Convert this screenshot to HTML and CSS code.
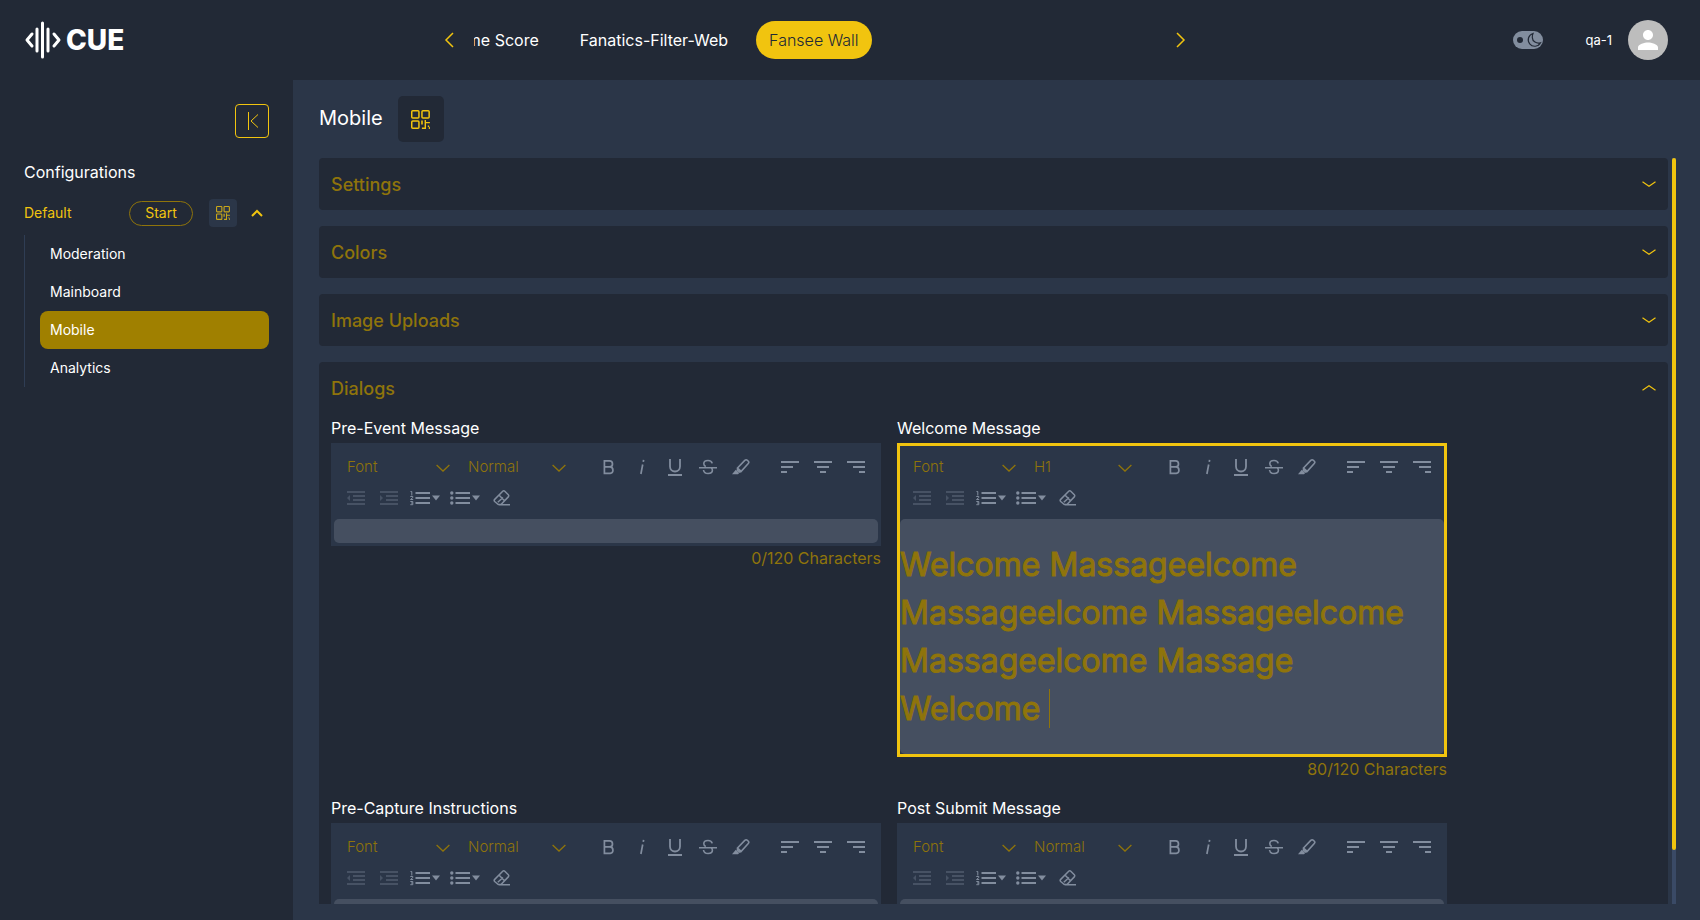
FILE: index.html
```html
<!DOCTYPE html>
<html lang="en">
<head>
<meta charset="utf-8">
<meta name="viewport" content="width=device-width, initial-scale=1">
<title>CUE - Mobile configuration</title>
<link rel="stylesheet" href="styles.css">
</head>
<body>
<svg class="sprite" aria-hidden="true">
  <symbol id="qr" viewBox="0 0 19 19">
    <g fill="none" stroke="currentColor" stroke-width="1.5"><rect x=".75" y=".75" width="7.2" height="7.2" rx="1"/><rect x="10.95" y=".75" width="7.2" height="7.2" rx="1"/><rect x=".75" y="10.95" width="7.2" height="7.2" rx="1"/></g>
    <path fill="currentColor" d="M10.2 10.6h1.6v4h-1.6zM13.6 10h1.4v2h3.9v1.2H15V18.9h-4.1v-1.5h2.7zM16.8 15.4h1.2v1.3h.9v2.2h-1.1v-1.8h-1z"/>
  </symbol>
  <symbol id="down" viewBox="0 0 14 8"><path d="M.6 1 7 7l6.400-6" fill="none" stroke="currentColor" stroke-width="1.3"/></symbol>
  <symbol id="fold" viewBox="0 0 14 6"><path d="M.5.7 7 5.200 13.500.7" fill="none" stroke="currentColor" stroke-width="1.2"/></symbol>
  <symbol id="bold" viewBox="0 0 18 18"><path d="M4.400 2.900h5.100a3 3 0 0 1 0 6H4.400zM4.400 8.900h5.800a3.300 3.300 0 0 1 0 6.500H4.400z" fill="none" stroke="currentColor" stroke-width="1.700"/></symbol>
  <symbol id="italic" viewBox="0 0 18 18"><path d="M9.700 6.500 7.900 16M10.600 1.900l-.3 2" fill="none" stroke="currentColor" stroke-width="1.700"/></symbol>
  <symbol id="underline" viewBox="0 0 18 18"><path d="M4 1v7.500a5 5 0 0 0 10 0V1M2 17h14" fill="none" stroke="currentColor" stroke-width="1.800"/></symbol>
  <symbol id="strike" viewBox="0 0 18 18"><path d="M0 9.700h18M13.200 5.400C12.800 3.500 11.200 2.500 9 2.500c-2.500 0-4.200 1.200-4.200 3.200 0 1.200.7 2.100 2 2.700M4.500 12c.3 2.200 2 3.500 4.600 3.500 2.500 0 4.300-1.200 4.300-3.200 0-1-.3-1.600-1-2.100" fill="none" stroke="currentColor" stroke-width="1.600"/></symbol>
  <symbol id="marker" viewBox="0 0 18 18"><path d="M5.500 10 12.800 2.400c.8-.8 1.800-.8 2.600-.1l.9.9c.7.7.7 1.500 0 2.300L9.200 13.300zM5.500 10v2.300l2.300 1.700 1.400-.7" fill="none" stroke="currentColor" stroke-width="1.600"/><path d="m3.800 11.800 3.400 3.200-1.200 1.200H0z" fill="currentColor"/></symbol>
  <symbol id="left" viewBox="0 0 18 18"><path d="M0 4h18M0 9h12M0 14h6" stroke="currentColor" stroke-width="2"/></symbol>
  <symbol id="center" viewBox="0 0 18 18"><path d="M0 4h18M3 9h12M6 14h6" stroke="currentColor" stroke-width="2"/></symbol>
  <symbol id="right" viewBox="0 0 18 18"><path d="M0 4h18M6 9h12M12 14h6" stroke="currentColor" stroke-width="2"/></symbol>
  <symbol id="outdent" viewBox="0 0 18 18"><path d="M0 3h18M6 7h12M6 11h12M0 15h18" stroke="currentColor" stroke-width="2"/><path d="M3 6v6L0 9z" fill="currentColor"/></symbol>
  <symbol id="indent" viewBox="0 0 18 18"><path d="M0 3h18M6 7h12M6 11h12M0 15h18" stroke="currentColor" stroke-width="2"/><path d="M0 6v6l3-3z" fill="currentColor"/></symbol>
  <symbol id="numbers" viewBox="0 0 30 18"><path d="M5.500 4H20M5.500 9H20M5.500 14H20" stroke="currentColor" stroke-width="2"/><path d="M.5 2.500h1.300v4M.3 7.500h2.500v1L.5 10.500h2.700M.3 12.500h2.500v3.200H.3M1 14h1.800" fill="none" stroke="currentColor"/><path d="M22 6.500h8L26 11.500z" fill="currentColor"/></symbol>
  <symbol id="bullets" viewBox="0 0 30 18"><path d="M5.500 4H20M5.500 9H20M5.500 14H20" stroke="currentColor" stroke-width="2"/><g fill="currentColor"><circle cx="1.800" cy="4" r="1.700"/><circle cx="1.800" cy="9" r="1.700"/><circle cx="1.800" cy="14" r="1.700"/><path d="M22 6.500h8L26 11.500z"/></g></symbol>
  <symbol id="eraser" viewBox="0 0 18 18"><path d="M1.700 10.400 9.700 2.300c.6-.6 1.500-.6 2.100 0l3.500 3.500c.6.6.6 1.500 0 2.100L8 15.500H5.300l-3.600-3c-.6-.6-.6-1.500 0-2.100zM6.200 6.200l5.300 5.600M4.800 13.200 10 8.500M6 15.700h11" fill="none" stroke="currentColor" stroke-width="1.500"/></symbol>
</svg>

<header class="topbar">
  <a class="logo" href="#" aria-label="CUE home">
    <svg class="logo-mark" viewBox="0 0 36 38" aria-hidden="true"><g fill="none" stroke="#fff" stroke-linecap="round" stroke-width="3"><path d="M17.500 2v34M12 8v22M23 8v22"/><path d="M7 13 2 19l5 6M29 13l5 6-5 6" stroke-linejoin="round"/></g></svg>
    <span class="logo-text">CUE</span>
  </a>
  <nav class="events" aria-label="Events">
    <button class="arrow" type="button" aria-label="Previous"><svg viewBox="0 0 10 16"><path d="M9 1 2 8l7 7" fill="none" stroke="currentColor" stroke-width="1.500"/></svg></button>
    <div class="event-window">
      <div class="event-track">
        <a class="event" href="#">Game Score</a>
        <a class="event" href="#">Fanatics-Filter-Web</a>
        <a class="event event-active" href="#" aria-current="page">Fansee Wall</a>
      </div>
    </div>
    <button class="arrow" type="button" aria-label="Next"><svg viewBox="0 0 10 16"><path d="m1 1 7 7-7 7" fill="none" stroke="currentColor" stroke-width="1.500"/></svg></button>
  </nav>
  <div class="account">
    <button class="theme" type="button" aria-label="Dark theme"><svg viewBox="0 0 30 18"><circle cx="7" cy="9" r="3" fill="#222936"/><path d="M20 2.500a6.500 6.500 0 1 0 7.500 9.300c-4 1.200-8-1.300-8.200-5.200-.1-1.600.200-3 .7-4.100z" fill="none" stroke="#222936" stroke-width="1.200"/></svg></button>
    <span class="user">qa-1</span>
    <button class="avatar" type="button" aria-label="Account"><svg viewBox="0 0 24 24"><path fill="#fff" d="M12 12c2.210 0 4-1.790 4-4s-1.790-4-4-4-4 1.790-4 4 1.790 4 4 4zm0 2c-2.670 0-8 1.340-8 4v2h16v-2c0-2.660-5.330-4-8-4z"/></svg></button>
  </div>
</header>

<div class="shell">
  <aside class="sidebar">
    <button class="collapse" type="button" aria-label="Collapse sidebar"><svg viewBox="0 0 12 18"><path d="M2.500 0v18M12 2.500 5 9l7 6.500" fill="none" stroke="currentColor"/></svg></button>
    <h2 class="side-title">Configurations</h2>
    <div class="config">
      <span class="config-name">Default</span>
      <button class="start" type="button">Start</button>
      <button class="qr-small" type="button" aria-label="Show QR code"><svg><use href="#qr"/></svg></button>
      <button class="fold" type="button" aria-label="Fold configuration"><svg viewBox="0 0 12 8"><path d="m1 7 5-5 5 5" fill="none" stroke="currentColor" stroke-width="2"/></svg></button>
    </div>
    <nav class="pages" aria-label="Configuration pages">
      <a class="page" href="#">Moderation</a>
      <a class="page" href="#">Mainboard</a>
      <a class="page page-active" href="#" aria-current="page">Mobile</a>
      <a class="page" href="#">Analytics</a>
    </nav>
  </aside>

  <main class="main">
    <div class="heading">
      <h1 class="title">Mobile</h1>
      <button class="qr-large" type="button" aria-label="Show QR code"><svg><use href="#qr"/></svg></button>
    </div>
    <div class="scroll">
      <div class="sections">
        <section class="panel"><button class="panel-head" type="button" aria-expanded="false"><span>Settings</span><svg><use href="#fold"/></svg></button></section>
        <section class="panel"><button class="panel-head" type="button" aria-expanded="false"><span>Colors</span><svg><use href="#fold"/></svg></button></section>
        <section class="panel"><button class="panel-head" type="button" aria-expanded="false"><span>Image Uploads</span><svg><use href="#fold"/></svg></button></section>
        <section class="panel">
          <button class="panel-head panel-open" type="button" aria-expanded="true"><span>Dialogs</span><svg><use href="#fold"/></svg></button>
          <div class="dialogs">

            <div class="field">
              <label class="label" for="pre-event">Pre-Event Message</label>
              <div class="editor">
                <div class="toolbar">
                  <div class="pick pick-font"><select aria-label="Font"><option>Font</option></select><svg><use href="#down"/></svg></div>
                  <div class="pick pick-size"><select aria-label="Text style"><option>Normal</option><option>H1</option></select><svg><use href="#down"/></svg></div>
                  <div class="tools tools-spaced">
                    <button class="tool" type="button" aria-label="Bold"><svg><use href="#bold"/></svg></button>
                    <button class="tool" type="button" aria-label="Italic"><svg><use href="#italic"/></svg></button>
                    <button class="tool" type="button" aria-label="Underline"><svg><use href="#underline"/></svg></button>
                    <button class="tool" type="button" aria-label="Strikethrough"><svg><use href="#strike"/></svg></button>
                    <button class="tool" type="button" aria-label="Highlight"><svg><use href="#marker"/></svg></button>
                  </div>
                  <div class="tools">
                    <button class="tool" type="button" aria-label="Align left"><svg><use href="#left"/></svg></button>
                    <button class="tool" type="button" aria-label="Align center"><svg><use href="#center"/></svg></button>
                    <button class="tool" type="button" aria-label="Align right"><svg><use href="#right"/></svg></button>
                  </div>
                  <div class="tools">
                    <button class="tool" type="button" aria-label="Outdent" disabled><svg><use href="#outdent"/></svg></button>
                    <button class="tool" type="button" aria-label="Indent" disabled><svg><use href="#indent"/></svg></button>
                    <button class="tool tool-wide" type="button" aria-label="Numbered list"><svg><use href="#numbers"/></svg></button>
                    <button class="tool tool-wide" type="button" aria-label="Bulleted list"><svg><use href="#bullets"/></svg></button>
                    <button class="tool" type="button" aria-label="Clear formatting"><svg><use href="#eraser"/></svg></button>
                  </div>
                </div>
                <textarea class="message" id="pre-event" rows="1"></textarea>
              </div>
              <p class="count">0/120 Characters</p>
            </div>

            <div class="field">
              <span class="label" id="welcome-label">Welcome Message</span>
              <div class="editor editor-focus">
                <div class="toolbar">
                  <div class="pick pick-font"><select aria-label="Font"><option>Font</option></select><svg><use href="#down"/></svg></div>
                  <div class="pick pick-size"><select aria-label="Text style"><option>H1</option><option>Normal</option></select><svg><use href="#down"/></svg></div>
                  <div class="tools tools-spaced">
                    <button class="tool" type="button" aria-label="Bold"><svg><use href="#bold"/></svg></button>
                    <button class="tool" type="button" aria-label="Italic"><svg><use href="#italic"/></svg></button>
                    <button class="tool" type="button" aria-label="Underline"><svg><use href="#underline"/></svg></button>
                    <button class="tool" type="button" aria-label="Strikethrough"><svg><use href="#strike"/></svg></button>
                    <button class="tool" type="button" aria-label="Highlight"><svg><use href="#marker"/></svg></button>
                  </div>
                  <div class="tools">
                    <button class="tool" type="button" aria-label="Align left"><svg><use href="#left"/></svg></button>
                    <button class="tool" type="button" aria-label="Align center"><svg><use href="#center"/></svg></button>
                    <button class="tool" type="button" aria-label="Align right"><svg><use href="#right"/></svg></button>
                  </div>
                  <div class="tools">
                    <button class="tool" type="button" aria-label="Outdent" disabled><svg><use href="#outdent"/></svg></button>
                    <button class="tool" type="button" aria-label="Indent" disabled><svg><use href="#indent"/></svg></button>
                    <button class="tool tool-wide" type="button" aria-label="Numbered list"><svg><use href="#numbers"/></svg></button>
                    <button class="tool tool-wide" type="button" aria-label="Bulleted list"><svg><use href="#bullets"/></svg></button>
                    <button class="tool" type="button" aria-label="Clear formatting"><svg><use href="#eraser"/></svg></button>
                  </div>
                </div>
                <div class="message message-rich" contenteditable="true" role="textbox" aria-multiline="true" aria-labelledby="welcome-label"><h1 class="rich-h1">Welcome Massageelcome Massageelcome Massageelcome Massageelcome Massage<br>Welcome <span class="caret"></span></h1></div>
              </div>
              <p class="count">80/120 Characters</p>
            </div>

            <div class="field">
              <label class="label" for="pre-capture">Pre-Capture Instructions</label>
              <div class="editor">
                <div class="toolbar">
                  <div class="pick pick-font"><select aria-label="Font"><option>Font</option></select><svg><use href="#down"/></svg></div>
                  <div class="pick pick-size"><select aria-label="Text style"><option>Normal</option><option>H1</option></select><svg><use href="#down"/></svg></div>
                  <div class="tools tools-spaced">
                    <button class="tool" type="button" aria-label="Bold"><svg><use href="#bold"/></svg></button>
                    <button class="tool" type="button" aria-label="Italic"><svg><use href="#italic"/></svg></button>
                    <button class="tool" type="button" aria-label="Underline"><svg><use href="#underline"/></svg></button>
                    <button class="tool" type="button" aria-label="Strikethrough"><svg><use href="#strike"/></svg></button>
                    <button class="tool" type="button" aria-label="Highlight"><svg><use href="#marker"/></svg></button>
                  </div>
                  <div class="tools">
                    <button class="tool" type="button" aria-label="Align left"><svg><use href="#left"/></svg></button>
                    <button class="tool" type="button" aria-label="Align center"><svg><use href="#center"/></svg></button>
                    <button class="tool" type="button" aria-label="Align right"><svg><use href="#right"/></svg></button>
                  </div>
                  <div class="tools">
                    <button class="tool" type="button" aria-label="Outdent" disabled><svg><use href="#outdent"/></svg></button>
                    <button class="tool" type="button" aria-label="Indent" disabled><svg><use href="#indent"/></svg></button>
                    <button class="tool tool-wide" type="button" aria-label="Numbered list"><svg><use href="#numbers"/></svg></button>
                    <button class="tool tool-wide" type="button" aria-label="Bulleted list"><svg><use href="#bullets"/></svg></button>
                    <button class="tool" type="button" aria-label="Clear formatting"><svg><use href="#eraser"/></svg></button>
                  </div>
                </div>
                <textarea class="message" id="pre-capture" rows="1"></textarea>
              </div>
            </div>

            <div class="field">
              <label class="label" for="post-submit">Post Submit Message</label>
              <div class="editor">
                <div class="toolbar">
                  <div class="pick pick-font"><select aria-label="Font"><option>Font</option></select><svg><use href="#down"/></svg></div>
                  <div class="pick pick-size"><select aria-label="Text style"><option>Normal</option><option>H1</option></select><svg><use href="#down"/></svg></div>
                  <div class="tools tools-spaced">
                    <button class="tool" type="button" aria-label="Bold"><svg><use href="#bold"/></svg></button>
                    <button class="tool" type="button" aria-label="Italic"><svg><use href="#italic"/></svg></button>
                    <button class="tool" type="button" aria-label="Underline"><svg><use href="#underline"/></svg></button>
                    <button class="tool" type="button" aria-label="Strikethrough"><svg><use href="#strike"/></svg></button>
                    <button class="tool" type="button" aria-label="Highlight"><svg><use href="#marker"/></svg></button>
                  </div>
                  <div class="tools">
                    <button class="tool" type="button" aria-label="Align left"><svg><use href="#left"/></svg></button>
                    <button class="tool" type="button" aria-label="Align center"><svg><use href="#center"/></svg></button>
                    <button class="tool" type="button" aria-label="Align right"><svg><use href="#right"/></svg></button>
                  </div>
                  <div class="tools">
                    <button class="tool" type="button" aria-label="Outdent" disabled><svg><use href="#outdent"/></svg></button>
                    <button class="tool" type="button" aria-label="Indent" disabled><svg><use href="#indent"/></svg></button>
                    <button class="tool tool-wide" type="button" aria-label="Numbered list"><svg><use href="#numbers"/></svg></button>
                    <button class="tool tool-wide" type="button" aria-label="Bulleted list"><svg><use href="#bullets"/></svg></button>
                    <button class="tool" type="button" aria-label="Clear formatting"><svg><use href="#eraser"/></svg></button>
                  </div>
                </div>
                <textarea class="message" id="post-submit" rows="1"></textarea>
              </div>
            </div>

          </div>
        </section>
      </div>
      <div class="bar"><div class="thumb"></div></div>
    </div>
  </main>
</div>
</body>
</html>
```

FILE: styles.css
```css
:root {
  --dark: #222936;
  --slate: #2b3648;
  --input: #454f60;
  --yellow: #f1c40f;
  --gold: #8f740b;
  --grey: #828d9e;
}
* { box-sizing: border-box; }
body {
  margin: 0;
  height: 100vh;
  display: flex;
  flex-direction: column;
  overflow: hidden;
  background: var(--dark);
  color: #fff;
  font: 400 16px/24px Inter, "Liberation Sans", sans-serif;
}
button, select, textarea { font: inherit; color: inherit; background: none; border: 0; padding: 0; margin: 0; }
button { display: flex; align-items: center; justify-content: center; }
a { color: inherit; text-decoration: none; }
h1, h2, p { margin: 0; font-weight: 400; }
svg { display: block; }
.sprite { display: none; }

/* Top bar */
.topbar {
  flex: none;
  height: 80px;
  display: flex;
  align-items: center;
  justify-content: space-between;
  padding: 0 32px 0 25px;
}
.logo { display: flex; align-items: center; gap: 5px; }
.logo-mark { width: 36px; height: 38px; }
.logo-text { font-size: 28px; font-weight: 800; line-height: 38px; }
.events { width: 742px; display: flex; align-items: center; gap: 20px; }
.arrow { color: var(--yellow); }
.arrow svg { width: 10px; height: 16px; }
.event-window { flex: 1; overflow: hidden; }
.event-track { display: flex; gap: 15px; margin-left: -41px; }
.event { padding: 7px 13px; border-radius: 19px; white-space: nowrap; }
.event-active { background: var(--yellow); color: var(--dark); font-weight: 300; }
.account { display: flex; align-items: center; }
.theme { width: 30px; height: 18px; margin: 0 42px 0 8px; border-radius: 9px; background: var(--grey); }
.theme svg { width: 30px; height: 18px; }
.user { margin-right: 16px; font-size: 13px; }
.avatar { width: 40px; height: 40px; border-radius: 50%; background: #bdbdbd; }
.avatar svg { width: 30px; height: 30px; }

.shell { flex: 1; min-height: 0; display: flex; }

/* Sidebar */
.sidebar { flex: none; width: 293px; padding: 24px 24px 0; }
.collapse { width: 34px; height: 34px; margin-left: auto; border: 1px solid var(--yellow); border-radius: 4px; color: var(--yellow); }
.collapse svg { width: 12px; height: 18px; }
.side-title { margin: 22px 0 15px; font-size: 16px; line-height: 24px; }
.config { display: flex; align-items: center; height: 28px; padding-right: 6px; color: var(--yellow); font-size: 14px; }
.config-name { flex: 1; }
.start { width: 64px; height: 25px; border: 1px solid var(--gold); border-radius: 13px; }
.qr-small { width: 28px; height: 28px; margin: 0 14px 0 16px; border-radius: 4px; background: var(--slate); }
.qr-small svg { width: 14px; height: 14px; opacity: .8; }
.fold svg { width: 12px; height: 8px; }
.pages { margin-top: 8px; padding-left: 15px; border-left: 1px solid #2f3d54; }
.page { display: block; padding: 7px 10px; border-radius: 8px; font-size: 14px; }
.page-active { background: #a08000; }

/* Main */
.main { flex: 1; min-width: 0; display: flex; flex-direction: column; padding: 16px 24px 16px 26px; background: var(--slate); }
.heading { display: flex; align-items: center; gap: 15px; margin-bottom: 16px; }
.title { padding-bottom: 2px; font-size: 20px; line-height: 28px; }
.qr-large { width: 46px; height: 46px; border-radius: 5px; background: var(--dark); color: var(--yellow); }
.qr-large svg { width: 19px; height: 19px; }
.scroll { flex: 1; min-height: 0; display: flex; gap: 4px; }
.sections { flex: 1; min-width: 0; display: flex; flex-direction: column; gap: 16px; overflow: hidden; }
.bar { flex: none; width: 4px; background: #3a4a66; }
.thumb { height: 92.75%; border-radius: 2px; background: var(--yellow); }
.panel { flex: none; border-radius: 4px; background: var(--dark); }
.panel-head { width: 100%; height: 52px; justify-content: space-between; padding: 0 12px; color: var(--gold); font-size: 18px; font-weight: 500; }
.panel-head span { padding-top: 2px; }
.panel-head svg { width: 14px; height: 6px; color: var(--yellow); }
.panel-open svg { transform: rotate(180deg); }

/* Dialog editors */
.dialogs { display: grid; grid-template-columns: repeat(2, minmax(0, 550px)); gap: 15px 16px; align-items: start; padding: 2px 12px 16px; }
.label { display: block; margin-bottom: 3px; }
.editor { border: 3px solid var(--slate); background: var(--slate); }
.editor-focus { border-color: var(--yellow); }
.toolbar { display: flex; flex-wrap: wrap; padding: 5px 5px 6px; color: var(--grey); }
.pick { display: grid; align-items: center; color: var(--gold); font-size: 15px; font-weight: 300; }
.pick-font { width: 121px; }
.pick-size { width: 116px; margin-right: 16px; }
.pick select { grid-area: 1 / 1; width: 100%; height: 31px; padding-left: 8px; appearance: none; }
.pick svg { grid-area: 1 / 1; justify-self: end; width: 14px; height: 8px; margin: 3px 10px 0 0; pointer-events: none; }
.tools { display: flex; }
.tools-spaced { margin-right: 16px; }
.tool { width: 33px; height: 31px; }
.tool svg { width: 18px; height: 18px; }
.tool:disabled { color: #475264; }
.tool-wide { width: 40px; }
.tool-wide svg { width: 30px; }
.message { display: block; width: 100%; height: 24px; border-radius: 5px; background: var(--input); color: var(--gold); resize: none; outline: 0; }
.message-rich { height: auto; padding: 22px 0 21px; }
.rich-h1 { font-size: 32px; line-height: 48px; -webkit-text-stroke: 1px; }
.caret { display: inline-block; width: 1px; height: 39px; vertical-align: -8px; background: var(--gold); }
.count { color: var(--gold); text-align: right; }
```
